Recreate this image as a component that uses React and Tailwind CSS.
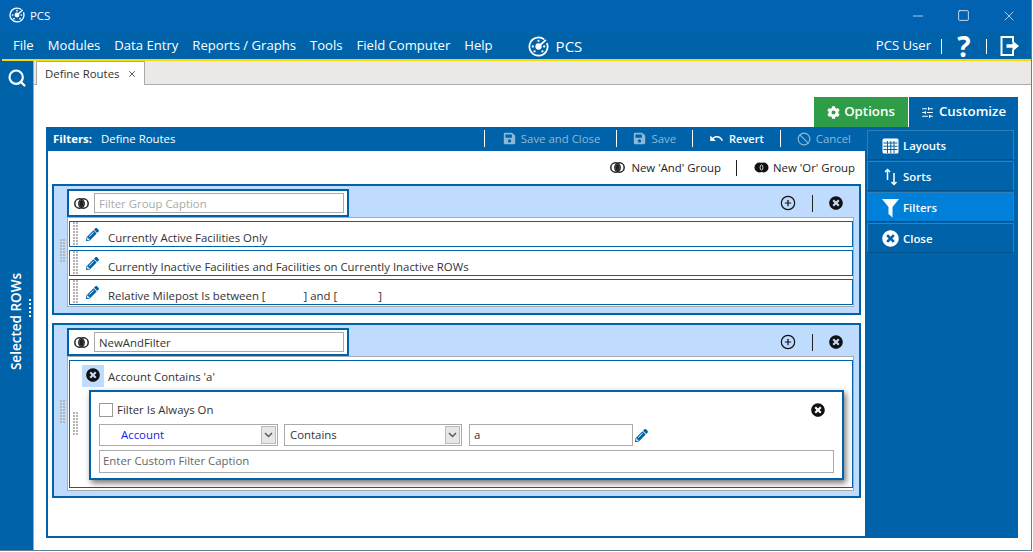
import { Minus, Square, X, Search, CirclePlus, SlidersHorizontal, Ban } from 'lucide-react'
import { FaCog, FaSave, FaTimesCircle, FaPencilAlt } from 'react-icons/fa'
import { MdUndo } from 'react-icons/md'

const MENUS = ['File', 'Modules', 'Data Entry', 'Reports / Graphs', 'Tools', 'Field Computer', 'Help']

function Logo({ size = 16 }) {
  return (
    <svg width={size} height={size} viewBox="0 0 24 24" fill="none" stroke="currentColor">
      <path d="M18.5 3.9A10.4 10.4 0 1 0 21.6 8" strokeWidth="2" />
      <circle cx="12" cy="12" r="3.6" fill="currentColor" stroke="none" />
      <path d="M12 12 L20.5 4.5" strokeWidth="2" />
      <circle cx="12" cy="5.5" r="1.3" fill="currentColor" stroke="none" />
      <circle cx="5.5" cy="12" r="1.3" fill="currentColor" stroke="none" />
      <circle cx="18.5" cy="12" r="1.3" fill="currentColor" stroke="none" />
      <circle cx="7.5" cy="17.5" r="1.3" fill="currentColor" stroke="none" />
      <circle cx="16.5" cy="17.5" r="1.3" fill="currentColor" stroke="none" />
    </svg>
  )
}

function AndIcon() {
  return (
    <svg width="15" height="11" viewBox="0 0 15 11" className="shrink-0">
      <circle cx="5.5" cy="5.5" r="4.7" fill="#fff" stroke="#222" strokeWidth="1.5" />
      <circle cx="9.5" cy="5.5" r="4.7" fill="none" stroke="#222" strokeWidth="1.5" />
      <path d="M7.5 1.6a4.6 4.6 0 0 1 0 7.8a4.6 4.6 0 0 1 0-7.8z" fill="#222" />
    </svg>
  )
}

function OrIcon() {
  return (
    <svg width="15" height="11" viewBox="0 0 15 11" className="shrink-0">
      <circle cx="5.5" cy="5.5" r="5" fill="#111" />
      <circle cx="9.5" cy="5.5" r="5" fill="#111" />
      <ellipse cx="7.5" cy="5.5" rx="1.4" ry="2.6" fill="none" stroke="#fff" strokeWidth="0.8" />
    </svg>
  )
}

function LogoutIcon() {
  return (
    <svg width="22" height="22" viewBox="0 0 22 22" fill="none" stroke="currentColor" strokeWidth="2">
      <path d="M14 7V2H2.5v18H14v-5" />
      <path d="M7.5 9.2h6V5.5l6.5 5.5-6.5 5.5v-3.7h-6z" fill="currentColor" strokeWidth="0" />
    </svg>
  )
}

function TableIcon() {
  return (
    <svg width="17" height="16" viewBox="0 0 17 16">
      <rect x="0.5" y="0.5" width="16" height="15" rx="1.5" fill="#fff" />
      <path d="M1.5 5h14M1.5 8.2h14M1.5 11.5h14M5.5 3v12M8.8 3v12M12 3v12" stroke="#0063a9" strokeWidth="1" />
    </svg>
  )
}

function SortIcon() {
  return (
    <svg width="14" height="18" viewBox="0 0 14 18" fill="none" stroke="#fff" strokeWidth="1.5">
      <path d="M3.5 12V1.5M1 4l2.5-2.5L6 4" />
      <path d="M10 5v11.5M7.5 14l2.5 2.5 2.5-2.5" />
    </svg>
  )
}

function FunnelIcon() {
  return (
    <svg width="17" height="20" viewBox="0 0 17 20" fill="#fff">
      <path d="M0 1h17l-6.5 8v10.500l-4-3.500V9z" />
    </svg>
  )
}

function Grip({ rows = 8, className = '' }) {
  const dots = Array.from({ length: rows * 2 })
  return (
    <div className={`absolute grid grid-cols-2 gap-px w-[5px] ${className}`}>
      {dots.map((_, i) => <span key={i} className="w-[2px] h-[2px] bg-[#b5b5b5]" />)}
    </div>
  )
}

function Pencil() {
  return <FaPencilAlt className="text-[#0063a9] text-[13px] shrink-0" />
}

function FilterRow({ children }) {
  return (
    <div className="relative h-[26px] border border-[#0063a9] bg-white mb-[3px] last:mb-0">
      <Grip className="left-[3px] top-0" />
      <div className="absolute left-[16px] top-[6px]"><Pencil /></div>
      <div className="pl-[38px] pt-[8px] text-[11.4px] leading-[16px] text-[#333]">{children}</div>
    </div>
  )
}

function GroupHead({ value, placeholder }) {
  return (
    <div className="flex items-start justify-between h-[31px] pl-[13px] pr-[16px] pt-[3px]">
      <div className="flex items-center w-[282px] h-[28px] border-2 border-[#0063a9] bg-white">
        <div className="w-[25px] flex justify-center"><AndIcon /></div>
        <div className={`w-[250px] h-[20px] border border-[#aaa] pl-[4px] text-[11.4px] leading-[19px] ${value ? 'text-[#333]' : 'text-[#aaa]'}`}>
          {value || placeholder}
        </div>
      </div>
      <div className="flex items-center h-[28px]">
        <CirclePlus size={16} strokeWidth={1.8} className="text-[#111]" />
        <div className="w-px h-[17px] bg-[#222] mx-[16px]" />
        <FaTimesCircle className="text-[14px] text-[#111]" />
      </div>
    </div>
  )
}

function SelectBox({ w, text, blue }) {
  return (
    <div className={`${w} h-[22px] border border-[#aaa] flex items-center justify-between p-[1px] bg-white`}>
      <span className={`text-[11.4px] ${blue ? 'pl-[20px] text-[#1a1ae6]' : 'pl-[4px] text-[#333]'}`}>{text}</span>
      <span className="w-[15px] h-[18px] bg-[#e6e6e6] border border-[#bbb] flex items-center justify-center">
        <svg width="9" height="6" viewBox="0 0 9 6" fill="none" stroke="#555" strokeWidth="1.4"><path d="M1 1l3.5 3.5L8 1" /></svg>
      </span>
    </div>
  )
}

function SideItem({ icon, text, active }) {
  return (
    <div className={`h-[30px] pt-px flex items-center gap-[4px] pl-[14px] text-[11.4px] font-semibold text-white border border-t-[#2d7fb8] border-x-[#2d7fb8] border-b-[#00508a] mb-px ${active ? 'bg-[#0080d8]' : 'bg-[#0063a9]'}`}>
      <span className="w-[17px] flex justify-center text-[17px]">{icon}</span>
      {text}
    </div>
  )
}

function Action({ icon, text, dim }) {
  return (
    <div className={`flex items-center gap-[5px] ${dim ? 'text-[11.4px] text-[#8db8d8] font-medium' : 'text-[11px] text-white font-semibold'}`}>
      {icon}{text}
    </div>
  )
}

export default function App() {
  return (
    <div className="w-[1032px] h-[551px] bg-[#0063a9] flex flex-col overflow-hidden font-['Open_Sans',sans-serif] border-r border-b border-[#5f7f96]">
      {/* title bar */}
      <div className="h-[31px] shrink-0 bg-[#0062b1] flex items-center justify-between pl-[9px] text-white">
        <div className="flex items-center gap-[5px] text-[11.4px]">
          <Logo size={16} />PCS
        </div>
        <div className="flex items-center gap-[31px] pr-[14px]">
          <Minus size={16} strokeWidth={1} />
          <Square size={13} strokeWidth={1.4} />
          <X size={16} strokeWidth={1} />
        </div>
      </div>

      {/* menu */}
      <div className="h-[28px] shrink-0 bg-[#0063a9] flex items-center justify-between text-white text-[13.1px] pt-[2px] pl-[13px] pr-[10px]">
        <div className="flex items-center gap-[14px]">
          {MENUS.map(m => <span key={m}>{m}</span>)}
          <span className="flex items-center gap-[7px] ml-[21px] font-medium text-[15px]">
            <Logo size={21} />PCS
          </span>
        </div>
        <div className="flex items-center">
          <span>PCS User</span>
          <div className="w-px h-[15px] bg-white ml-[10px]" />
          <span className="text-[28px] leading-none font-bold w-[44px] text-center">?</span>
          <div className="w-px h-[15px] bg-white mr-[12px]" />
          <LogoutIcon />
        </div>
      </div>
      <div className="h-[2px] shrink-0 ml-[2px] bg-[#f5d90a]" />

      <div className="flex-1 flex min-h-0">
        {/* left rail */}
        <div className="relative w-[34px] shrink-0 border-r border-[#9aa9b5] text-white">
          <div className="flex justify-center pt-[7px]"><Search size={20} strokeWidth={2.6} /></div>
          <div className="absolute left-[7px] top-[212px] [writing-mode:vertical-rl] rotate-180 text-[13.5px] font-semibold leading-[18px]">Selected ROWs</div>
          <div className="absolute left-[29px] top-[238px] flex flex-col gap-[2px]">
            {[0, 1, 2, 3, 4].map(i => <span key={i} className="w-[2px] h-[2px] bg-white" />)}
          </div>
        </div>

        <div className="flex-1 flex flex-col min-w-0 bg-white">
          {/* tabs */}
          <div className="h-[24px] shrink-0 bg-[#ece8e6] border-b border-[#aaa] flex">
            <div className="w-[109px] ml-[2px] h-[24px] bg-white border border-b-0 border-[#aaa] flex items-center pl-[8px] text-[11.4px] text-[#333]">
              Define Routes
              <X size={10} strokeWidth={2.4} className="ml-[8px] text-[#555]" />
            </div>
          </div>

          <div className="flex-1 min-h-0 flex flex-col pl-[12px] pr-[13px] pt-[12px] pb-[12px]">
            {/* top buttons */}
            <div className="h-[30px] shrink-0 flex justify-end text-white text-[13.3px] font-semibold">
              <div className="w-[94px] bg-[#2f9d47] flex items-center justify-center gap-[4px]"><FaCog className="text-[13px]" />Options</div>
              <div className="w-px bg-white" />
              <div className="w-[109px] bg-[#0063a9] flex items-center justify-center gap-[5px]"><SlidersHorizontal size={13} />Customize</div>
            </div>

            <div className="flex-1 min-h-0 flex">
              {/* filter panel */}
              <div className="w-[821px] shrink-0 border-2 border-t-0 border-[#0063a9] flex flex-col">
                <div className="h-[24px] shrink-0 bg-[#0063a9] flex items-center justify-between text-white text-[11.4px] pl-[5px] pr-[14px]">
                  <div className="flex gap-[9px]"><span className="font-bold">Filters:</span><span className="font-medium">Define Routes</span></div>
                  <div className="flex items-center">
                    <div className="w-px h-[17px] bg-white mr-[18px]" />
                    <Action dim icon={<FaSave className="text-[13px]" />} text="Save and Close" />
                    <div className="w-px h-[17px] bg-white mx-[16px]" />
                    <Action dim icon={<FaSave className="text-[13px]" />} text="Save" />
                    <div className="w-px h-[17px] bg-white mx-[16px]" />
                    <Action icon={<MdUndo className="text-[15px]" />} text="Revert" />
                    <div className="w-px h-[17px] bg-white mx-[16px]" />
                    <Action dim icon={<Ban size={14} />} text="Cancel" />
                  </div>
                </div>

                <div className="h-[33px] shrink-0 flex items-center justify-end pr-[10px] text-[11.4px] text-[#222]">
                  <AndIcon /><span className="ml-[6px]">New 'And' Group</span>
                  <div className="w-px h-[16px] bg-[#222] ml-[15px] mr-[17px]" />
                  <OrIcon /><span className="ml-[4px]">New 'Or' Group</span>
                </div>

                {/* group 1 */}
                <div className="relative mx-[4px] h-[131px] border-2 border-[#0063a9] bg-[#bfdbfd]">
                  <Grip className="left-[6px] top-[53px]" />
                  <GroupHead placeholder="Filter Group Caption" />
                  <div className="ml-[13px] mr-[5px] h-[90px] border border-[#aaa] bg-white pl-px pt-[3px]">
                    <FilterRow>Currently Active Facilities Only</FilterRow>
                    <FilterRow>Currently Inactive Facilities and Facilities on Currently Inactive ROWs</FilterRow>
                    <FilterRow>
                      Relative Milepost Is between [<span className="inline-block w-[38px]" />] and [<span className="inline-block w-[41px]" />]
                    </FilterRow>
                  </div>
                </div>

                {/* group 2 */}
                <div className="relative mx-[4px] mt-[8px] h-[175px] border-2 border-[#0063a9] bg-[#bfdbfd]">
                  <Grip className="left-[6px] top-[75px]" />
                  <GroupHead value="NewAndFilter" />
                  <div className="ml-[13px] mr-[5px] h-[135px] border border-[#aaa] bg-white pl-px pt-[3px]">
                    <div className="relative h-[128px] border border-[#0063a9]">
                      <Grip className="left-[3px] top-[51px]" />
                      <div className="flex items-center h-[28px]">
                        <div className="ml-[12px] mt-[2px] w-[22px] h-[22px] bg-[#bfdbfd] flex justify-center pt-[3px]">
                          <FaTimesCircle className="text-[14px] text-[#111]" />
                        </div>
                        <span className="ml-[4px] mt-[4px] text-[11.4px] text-[#333]">Account Contains 'a'</span>
                      </div>
                      <div className="ml-[19px] mt-[1px] w-[755px] h-[90px] border-2 border-[#0063a9] bg-white shadow-[2px_3px_6px_rgba(0,0,0,0.55)] pl-[8px] pr-[8px] pt-[11px]">
                        <div className="flex items-center justify-between h-[14px]">
                          <div className="flex items-center gap-[4px] text-[11.4px] text-[#333]">
                            <div className="w-[14px] h-[14px] border border-[#999] bg-white" />
                            Filter Is Always On
                          </div>
                          <FaTimesCircle className="text-[14px] text-[#111] mr-[9px]" />
                        </div>
                        <div className="flex items-center mt-[7px]">
                          <SelectBox w="w-[179px]" text="Account" blue />
                          <div className="w-[6px]" />
                          <SelectBox w="w-[178px]" text="Contains" />
                          <div className="w-[164px] h-[22px] ml-[7px] border border-[#aaa] pl-[4px] text-[11.4px] leading-[20px] text-[#333]">a</div>
                          <div className="ml-[2px]"><FaPencilAlt className="text-[#0063a9] text-[13px]" /></div>
                        </div>
                        <div className="h-[23px] mt-[4px] border border-[#aaa] pl-[3px] text-[11.4px] leading-[20px] text-[#666]">Enter Custom Filter Caption</div>
                      </div>
                    </div>
                  </div>
                </div>
              </div>

              {/* right panel */}
              <div className="flex-1 bg-[#0063a9] pt-[3px] pr-[4px]">
                <SideItem icon={<TableIcon />} text="Layouts" />
                <SideItem icon={<SortIcon />} text="Sorts" />
                <SideItem active icon={<FunnelIcon />} text="Filters" />
                <SideItem icon={<FaTimesCircle />} text="Close" />
              </div>
            </div>
          </div>
        </div>
      </div>
    </div>
  )
}
